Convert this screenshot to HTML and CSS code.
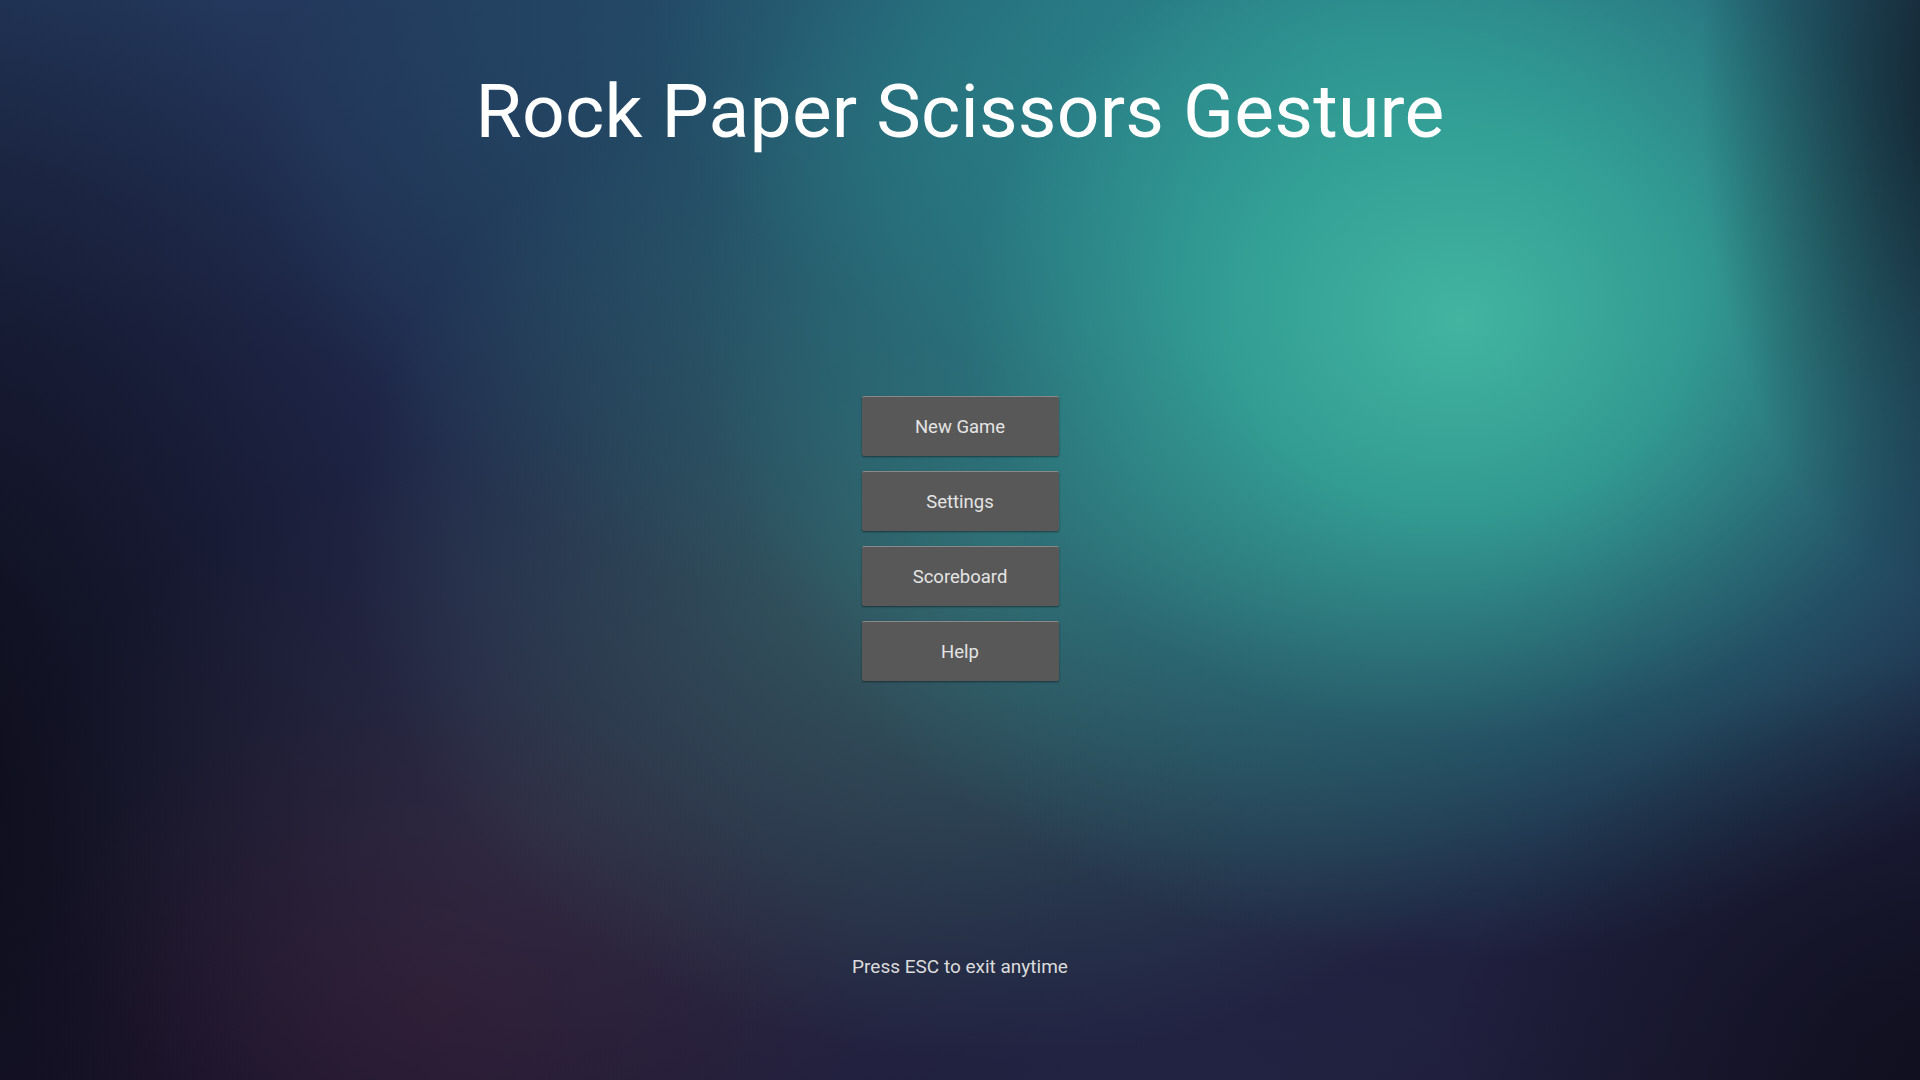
FILE: index.html
```html
<!DOCTYPE html>
<html lang="en">
<head>
<meta charset="utf-8">
<title>Rock Paper Scissors Gesture</title>
<link rel="stylesheet" href="styles.css">
</head>
<body>
<main class="screen">
  <h1 class="title">Rock Paper Scissors Gesture</h1>
  <nav class="menu">
    <button class="menu-btn">New Game</button>
    <button class="menu-btn">Settings</button>
    <button class="menu-btn">Scoreboard</button>
    <button class="menu-btn">Help</button>
  </nav>
  <p class="hint">Press ESC to exit anytime</p>
</main>
</body>
</html>
```
FILE: styles.css
```css
html, body {
  margin: 0;
  padding: 0;
  width: 100%;
  height: 100%;
  overflow: hidden;
}
body {
  font-family: Roboto, "Noto Sans", sans-serif;
  background-color: #1c2242;
  background-image:
    radial-gradient(ellipse 260px 520px at 1960px 80px, rgba(16,24,36,0.85), rgba(16,24,36,0) 100%),
    radial-gradient(ellipse 520px 420px at 1960px 1080px, rgba(14,14,28,0.95), rgba(14,14,28,0) 100%),
    radial-gradient(ellipse 760px 640px at 1460px 320px, rgba(66,180,160,1) 0%, rgba(52,164,152,0.9) 30%, rgba(40,124,132,0.5) 65%, rgba(40,110,130,0) 100%),
    radial-gradient(ellipse 700px 380px at 1350px 40px, rgba(44,150,150,0.85), rgba(44,150,150,0) 100%),
    radial-gradient(ellipse 900px 500px at 1150px 150px, rgba(36,120,130,0.7), rgba(36,120,130,0) 100%),
    radial-gradient(ellipse 650px 520px at 1000px 540px, rgba(64,126,116,0.7), rgba(64,126,116,0) 100%),
    radial-gradient(ellipse 520px 380px at 560px 820px, rgba(56,52,72,0.55), rgba(56,52,72,0) 100%),
    radial-gradient(ellipse 420px 300px at 440px 1000px, rgba(52,22,46,0.65), rgba(52,22,46,0) 100%),
    radial-gradient(ellipse 1100px 420px at 1150px 1080px, rgba(40,44,80,0.6), rgba(40,44,80,0) 100%),
    radial-gradient(ellipse 560px 900px at -80px 760px, rgba(12,12,24,0.95), rgba(12,12,24,0) 100%),
    linear-gradient(180deg, #23385c 0%, #20284c 35%, #1f2344 60%, #1a1630 100%);
}
.screen {
  height: 1080px;
  display: flex;
  flex-direction: column;
  align-items: center;
  box-sizing: border-box;
  padding-top: 66px;
}
.title {
  margin: 0;
  font-size: 75px;
  font-weight: 400;
  line-height: 90px;
  color: #ffffff;
  letter-spacing: 0.2px;
}
.menu {
  margin-top: 240px;
  display: flex;
  flex-direction: column;
  gap: 15px;
}
.menu-btn {
  width: 197px;
  height: 60px;
  background: #585858;
  border: none;
  border-top: 1px solid #8a8a8a;
  border-radius: 2px;
  box-shadow: 0 1px 2px rgba(0,0,0,0.45);
  color: #e4e4e4;
  font-family: Roboto, "Noto Sans", sans-serif;
  font-size: 18.5px;
  padding: 0;
  cursor: pointer;
}
.hint {
  margin: 0;
  margin-top: 274px;
  font-size: 19px;
  color: #dcdcdc;
}
```
